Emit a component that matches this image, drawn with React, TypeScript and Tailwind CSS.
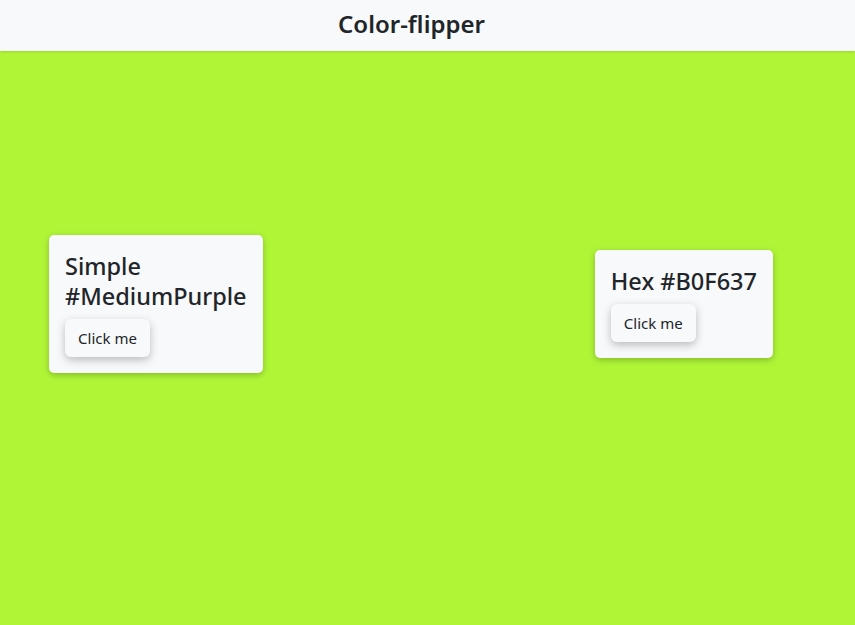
import React, { useState } from "react";

const font = { fontFamily: '"Noto Sans", "Open Sans", sans-serif' };

function FlipCard({ label, value }: { label: string; value: string }) {
  const split = label === "Simple";
  return (
    <div className="bg-[#f8f9fa] rounded-[5px] shadow-[0_2px_6px_rgba(0,0,0,0.25)] p-4">
      <h4 className="text-[23.5px] leading-[30px] font-medium text-[#212529] mb-2">
        {label}
        {split ? <br /> : " "}
        {value}
      </h4>
      <button className="bg-[#f8f9fa] rounded-[6px] shadow-[0_3px_8px_rgba(0,0,0,0.25)] w-[85px] h-[38px] text-[15px] text-[#212529]">
        Click me
      </button>
    </div>
  );
}

export default function App() {
  const [bg] = useState("#B0F637");

  return (
    <div className="min-h-screen flex flex-col" style={font}>
      {/* header */}
      <header className="h-[51px] bg-[#f8f9fa] flex items-center justify-center pr-[32px] shadow-sm relative z-10">
        <h1 className="text-[24px] font-semibold text-[#212529] -mt-1">Color-flipper</h1>
      </header>

      {/* color area */}
      <main className="flex-1" style={{ backgroundColor: bg }}>
        <div className="h-[506px] flex items-center justify-between pl-[49px] pr-[82px]">
          <FlipCard label="Simple" value="#MediumPurple" />
          <FlipCard label="Hex" value="#B0F637" />
        </div>
      </main>
    </div>
  );
}
